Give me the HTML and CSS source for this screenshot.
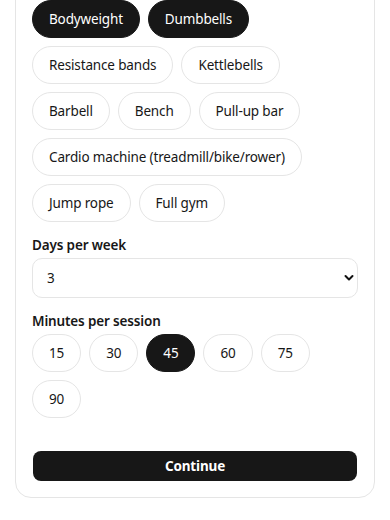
FILE: index.html
```html
<!DOCTYPE html>
<html lang="en">
<head>
<meta charset="utf-8">
<title>Preferences</title>
<link rel="stylesheet" href="styles.css">
</head>
<body>
<div class="page">
  <div class="card">
    <div class="chips">
      <button class="chip selected">Bodyweight</button>
      <button class="chip selected">Dumbbells</button>
      <button class="chip">Resistance bands</button>
      <button class="chip">Kettlebells</button>
      <button class="chip">Barbell</button>
      <button class="chip">Bench</button>
      <button class="chip">Pull-up bar</button>
      <button class="chip">Cardio machine (treadmill/bike/rower)</button>
      <button class="chip">Jump rope</button>
      <button class="chip">Full gym</button>
    </div>

    <div class="field">
      <label class="label" for="days">Days per week</label>
      <div class="select-wrap">
        <select id="days" class="select">
          <option>1</option>
          <option>2</option>
          <option selected>3</option>
          <option>4</option>
          <option>5</option>
          <option>6</option>
          <option>7</option>
        </select>
        <svg class="chevron" width="10" height="8" viewBox="0 0 10 8" aria-hidden="true">
          <path d="M1.5 2 L5 5.5 L8.5 2" fill="none" stroke="#111" stroke-width="2" stroke-linecap="round" stroke-linejoin="round"/>
        </svg>
      </div>
    </div>

    <div class="field">
      <div class="label">Minutes per session</div>
      <div class="chips">
        <button class="chip num">15</button>
        <button class="chip num">30</button>
        <button class="chip num selected">45</button>
        <button class="chip num">60</button>
        <button class="chip num">75</button>
        <button class="chip num">90</button>
      </div>
    </div>

    <button class="continue">Continue</button>
  </div>
</div>
</body>
</html>
```

FILE: styles.css
```css
* {
  box-sizing: border-box;
}

html, body {
  margin: 0;
  padding: 0;
  background: #ffffff;
}

body {
  font-family: "Noto Sans", "Open Sans", sans-serif;
  font-size: 13.5px;
  letter-spacing: -0.15px;
  color: #171717;
}

.page {
  padding: 0 15px 22px 15px;
}

.card {
  margin-top: -17px;
  border: 1px solid #e5e5e5;
  border-radius: 16px;
  padding: 16px;
  background: #ffffff;
  display: flex;
  flex-direction: column;
}

.chips {
  display: flex;
  flex-wrap: wrap;
  gap: 8px;
}

.chip {
  font-family: inherit;
  font-size: 13.5px;
  letter-spacing: -0.15px;
  line-height: 20px;
  color: #171717;
  background: #ffffff;
  border: 1px solid #e5e5e5;
  border-radius: 999px;
  padding: 8px 16px;
  height: 38px;
  cursor: pointer;
}

.chip.selected {
  background: #171717;
  border-color: #171717;
  color: #ffffff;
}

.field {
  margin-top: 13px;
  display: flex;
  flex-direction: column;
  gap: 3px;
}

.label {
  font-weight: 600;
  font-size: 13.5px;
  line-height: 20px;
}

.select-wrap {
  position: relative;
}

.select {
  width: 100%;
  height: 40px;
  appearance: none;
  -webkit-appearance: none;
  font-family: inherit;
  font-size: 13.5px;
  letter-spacing: -0.15px;
  color: #171717;
  background: #ffffff;
  border: 1px solid #e5e5e5;
  border-radius: 10px;
  padding: 0 14px;
}

.chevron {
  position: absolute;
  right: 4px;
  top: 16px;
  pointer-events: none;
}

.continue {
  margin: 33px 1px 0 1px;
  height: 30px;
  border: none;
  border-radius: 8px;
  background: #171717;
  color: #ffffff;
  font-family: inherit;
  font-size: 13.5px;
  letter-spacing: -0.15px;
  font-weight: 700;
  cursor: pointer;
}
```
